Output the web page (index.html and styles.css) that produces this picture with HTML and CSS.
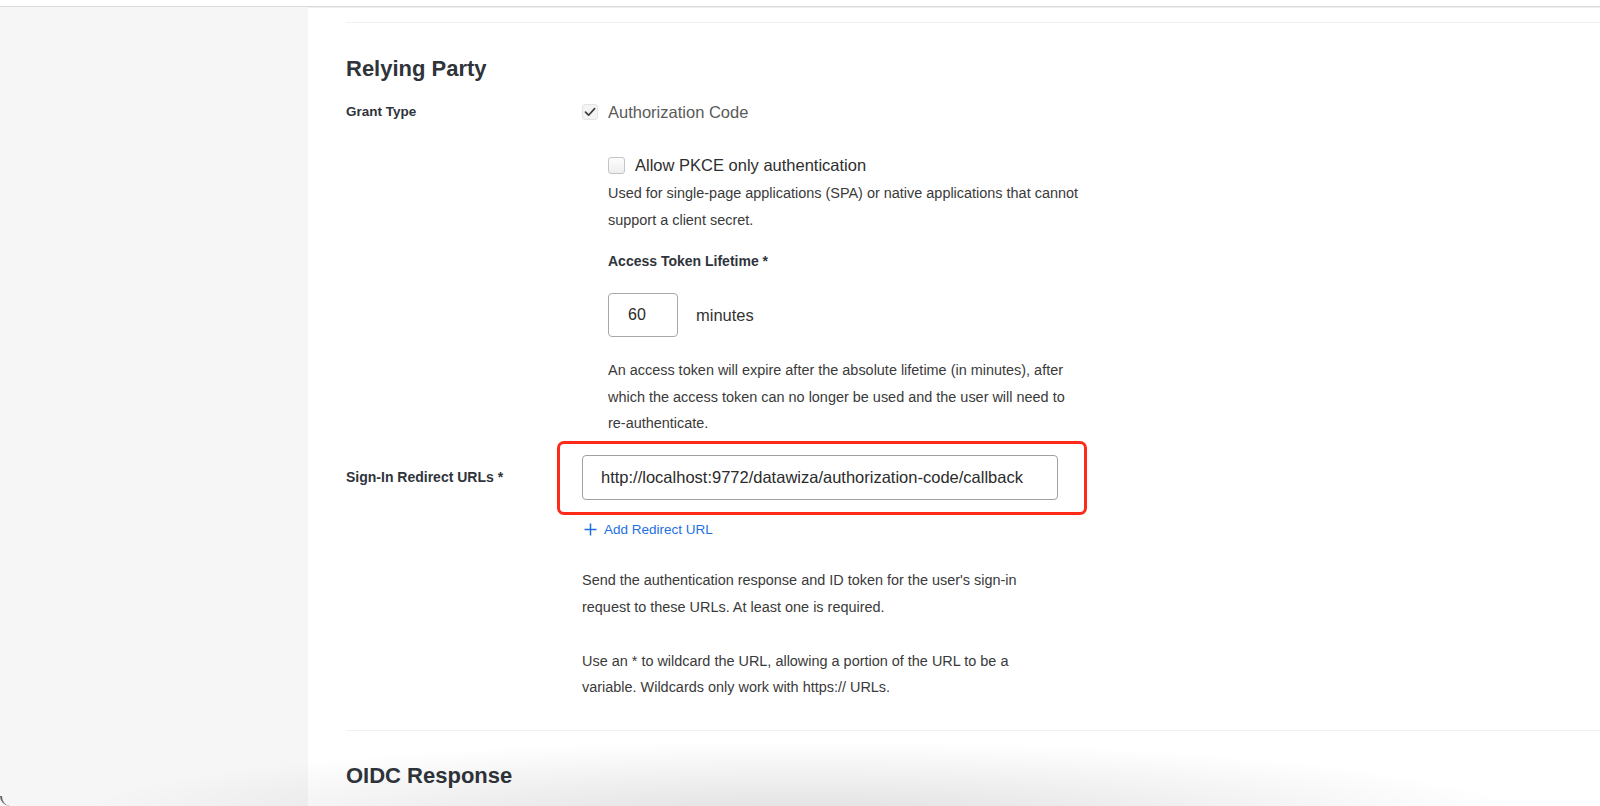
FILE: index.html
```html
<!DOCTYPE html>
<html lang="en">
<head>
<meta charset="utf-8">
<title>Relying Party</title>
<link rel="stylesheet" href="styles.css">
</head>
<body>
<div class="topbar"></div>
<div class="layout">
  <aside class="sidebar"></aside>
  <main class="main">
    <div class="divider first"></div>
    <h2 class="section-title">Relying Party</h2>

    <div class="row grant-row">
      <div class="label">Grant Type</div>
      <div class="field">
        <label class="check-line disabled">
          <span class="cbox checked">
            <svg width="12" height="10" viewBox="0 0 12 10"><path d="M1.5 5.2 L4.6 8.2 L10.6 1.6" fill="none" stroke="#3c3c3c" stroke-width="1.7" stroke-linecap="round" stroke-linejoin="round"/></svg>
          </span>
          <span>Authorization Code</span>
        </label>

        <div class="sub">
          <label class="check-line pkce">
            <span class="cbox empty"></span>
            <span>Allow PKCE only authentication</span>
          </label>
          <p class="help tight">Used for single-page applications (SPA) or native applications that cannot<br>support a client secret.</p>

          <div class="sub-label">Access Token Lifetime *</div>
          <div class="lifetime">
            <div class="num-input">60</div>
            <span class="unit">minutes</span>
          </div>
          <p class="help para">An access token will expire after the absolute lifetime (in minutes), after<br>which the access token can no longer be used and the user will need to<br>re-authenticate.</p>
        </div>
      </div>
    </div>

    <div class="row url-row">
      <div class="label">Sign-In Redirect URLs *</div>
      <div class="field">
        <div class="url-wrap">
          <div class="url-input">http://localhost:9772/datawiza/authorization-code/callback</div>
          <div class="highlight"></div>
        </div>
        <a class="add-link" href="#">
          <svg width="13" height="13" viewBox="0 0 13 13"><path d="M6.5 0.5 V12.5 M0.5 6.5 H12.5" stroke="#1d6fe3" stroke-width="1.5" fill="none"/></svg>
          <span>Add Redirect URL</span>
        </a>
        <p class="help url-help">Send the authentication response and ID token for the user's sign-in<br>request to these URLs. At least one is required.</p>
        <p class="help url-help2">Use an * to wildcard the URL, allowing a portion of the URL to be a<br>variable. Wildcards only work with https:// URLs.</p>
      </div>
    </div>

    <div class="divider second"></div>
    <h2 class="section-title oidc">OIDC Response</h2>
  </main>
</div>
<div class="bottom-shadow"></div>
<div class="corner"></div>
</body>
</html>
```

FILE: styles.css
```css
* { box-sizing: border-box; }

html, body {
  margin: 0;
  padding: 0;
  height: 806px;
  overflow: hidden;
  background: #ffffff;
  font-family: "Liberation Sans", Arial, Helvetica, sans-serif;
  color: #333;
}

.topbar {
  height: 7px;
  border-bottom: 1px solid #dcdcdc;
  box-shadow: 0 1px 0 #efefef;
  background: #fff;
}

.layout {
  display: flex;
  height: 799px;
}

.sidebar {
  width: 308px;
  flex: 0 0 308px;
  background: #f6f6f6;
}

.main {
  flex: 1;
  padding-left: 38px;
}

.divider {
  height: 1px;
  background: #f0f0f0;
}
.divider.first { margin-top: 15px; }
.divider.second { margin-top: 29px; }

.section-title {
  margin: 32px 0 0;
  font-size: 22px;
  line-height: 28px;
  font-weight: bold;
  color: #2f343b;
}
.section-title.oidc { margin-top: 31px; }

.row {
  display: flex;
}
.grant-row { margin-top: 19px; }
.url-row { margin-top: 18px; }

.label {
  width: 236px;
  flex: 0 0 236px;
  font-size: 13.5px;
  font-weight: bold;
  line-height: 20px;
  color: #2f343b;
}
.url-row .label { padding-top: 12px; font-size: 14px; }

.field { flex: 1; }

.check-line {
  display: flex;
  align-items: center;
  gap: 10px;
  font-size: 16.5px;
  line-height: 20px;
}
.check-line.disabled { color: #5a5a5a; }

.cbox {
  display: inline-flex;
  align-items: center;
  justify-content: center;
  border-radius: 3px;
}
.cbox.checked {
  width: 16px;
  height: 16px;
  background: #f4f4f4;
  border: 1px solid #e4e4e4;
}
.cbox.empty {
  width: 17px;
  height: 17px;
  background: linear-gradient(#fdfdfd, #eeeeee);
  border: 1px solid #c4c4c4;
}

.sub { padding-left: 26px; }
.pkce { margin-top: 33px; color: #2e2e2e; }

.help {
  margin: 0;
  font-size: 14.45px;
  line-height: 26.5px;
  color: #3a3a3a;
}
.help.tight { margin-top: 5px; }
.help.para { margin-top: 20px; }

.sub-label {
  margin-top: 18px;
  font-size: 14px;
  font-weight: bold;
  line-height: 20px;
  color: #2f343b;
}

.lifetime {
  display: flex;
  align-items: center;
  gap: 18px;
  margin-top: 22px;
}
.num-input {
  width: 70px;
  height: 44px;
  border: 1px solid #a8a8a8;
  border-radius: 4px;
  padding-left: 19px;
  font-size: 16px;
  line-height: 42px;
  color: #2b2b2b;
}
.unit {
  font-size: 16.5px;
  color: #333;
}

.url-wrap {
  position: relative;
  width: 476px;
}
.url-input {
  height: 45px;
  border: 1px solid #a0a0a0;
  border-radius: 4px;
  padding-left: 18px;
  font-size: 16.5px;
  line-height: 43px;
  color: #2b2b2b;
  white-space: nowrap;
}
.highlight {
  position: absolute;
  left: -25px;
  top: -14px;
  right: -29px;
  bottom: -15px;
  border: 3px solid #ff2a17;
  border-radius: 7px;
}

.add-link {
  display: inline-flex;
  align-items: center;
  gap: 7px;
  margin-top: 20px;
  margin-left: 2px;
  font-size: 13.5px;
  line-height: 20px;
  color: #1d6fe3;
  text-decoration: none;
}

.url-help { margin-top: 27px; }
.url-help2 { margin-top: 27.5px; }

.bottom-shadow {
  position: absolute;
  left: 0;
  right: 0;
  bottom: 0;
  height: 80px;
  pointer-events: none;
  background:
    radial-gradient(ellipse 46% 100% at 50% 118%, rgba(0,0,0,0.13), rgba(0,0,0,0.04) 70%, rgba(0,0,0,0) 100%);
}

.corner {
  position: absolute;
  left: 0;
  bottom: 0;
  width: 10px;
  height: 10px;
  border-left: 2px solid #666;
  border-bottom-left-radius: 10px;
  pointer-events: none;
}
```
